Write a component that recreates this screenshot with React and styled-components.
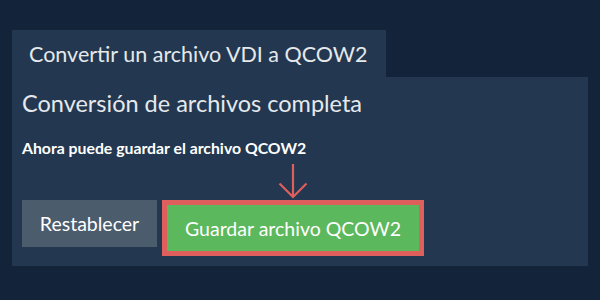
import React from "react";
import styled, { createGlobalStyle } from "styled-components";

const Global = createGlobalStyle`
  html, body { margin: 0; padding: 0; background: #13243a; }
  body { font-family: Lato, "Open Sans", sans-serif; }
`;

const Page = styled.div`
  width: 600px;
  height: 300px;
  box-sizing: border-box;
  padding: 30px 12px 0 12px;
  background: #13243a;
  display: flex;
  flex-direction: column;
  align-items: flex-start;
`;

const Tab = styled.div`
  background: #233850;
  color: #e6e9ec;
  font-size: 21.5px;
  height: 47px;
  box-sizing: border-box;
  padding: 0 18px 0 17px;
  display: flex;
  align-items: center;
`;

const Panel = styled.div`
  align-self: stretch;
  background: #233850;
  height: 189px;
  box-sizing: border-box;
  padding: 12px 10px 0 10px;
  display: flex;
  flex-direction: column;
`;

const Heading = styled.div`
  color: #e6e9ec;
  font-size: 23.5px;
  line-height: 28px;
`;

const Note = styled.div`
  color: #ffffff;
  font-size: 15.8px;
  font-weight: 700;
  margin-top: 22px;
  line-height: 18px;
`;

const ArrowRow = styled.div`
  height: 43px;
  box-sizing: border-box;
  padding-left: 256px;
  padding-bottom: 1px;
  display: flex;
  align-items: flex-end;
`;

const Buttons = styled.div`
  display: flex;
  gap: 5px;
  align-items: flex-start;
`;

const Button = styled.button`
  font-family: Lato, "Open Sans", sans-serif;
  font-size: 19.5px;
  color: #ffffff;
  border: none;
  margin: 0;
  cursor: pointer;
  background: ${(p) => (p.$primary ? "#5cb85c" : "#4b5c6d")};
  height: ${(p) => (p.$primary ? "56px" : "47px")};
  padding: 0;
  box-sizing: border-box;
  ${(p) => (p.$primary ? "border: 5px solid #df5f5c;" : "")}
  display: flex;
  align-items: center;
  justify-content: center;
  width: ${(p) => p.$w}px;
`;

function Arrow() {
  return (
    <svg width="30" height="36" viewBox="0 0 30 36" fill="none">
      <path d="M15 1 V34 M1.5 20.5 L15 34 L28.5 20.5" stroke="#df5f5c" strokeWidth="2.2" />
    </svg>
  );
}

export default function App() {
  return (
    <>
      <Global />
      <Page>
        <Tab>Convertir un archivo VDI a QCOW2</Tab>
        <Panel>
          <Heading>Conversión de archivos completa</Heading>
          <Note>Ahora puede guardar el archivo QCOW2</Note>
          <ArrowRow>
            <Arrow />
          </ArrowRow>
          <Buttons>
            <Button $w={135}>Restablecer</Button>
            <Button $primary $w={262}>Guardar archivo QCOW2</Button>
          </Buttons>
        </Panel>
      </Page>
    </>
  );
}
